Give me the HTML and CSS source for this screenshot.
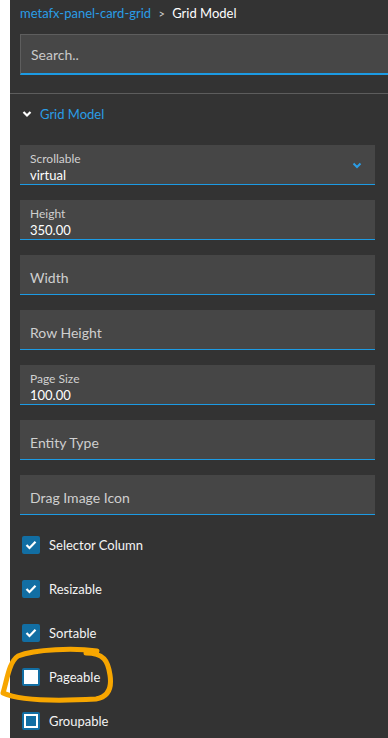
FILE: index.html
```html
<!DOCTYPE html>
<html lang="en">
<head>
  <meta charset="UTF-8">
  <meta name="viewport" content="width=device-width, initial-scale=1.0">
  <title>Grid Model</title>
  <link rel="stylesheet" href="styles.css">
</head>
<body>

<div class="panel">
  <!-- Breadcrumb -->
  <div class="crumbs">
    <a href="#" class="crumb-link">metafx-panel-card-grid</a>
    <span class="crumb-sep">&gt;</span>
    <span class="crumb-current">Grid Model</span>
  </div>

  <!-- Search -->
  <div class="search">
    <span class="placeholder">Search..</span>
  </div>

  <div class="divider"></div>

  <!-- Section -->
  <div class="section-head">
    <svg class="chev" width="10" height="8" viewBox="0 0 10 8">
      <path d="M1.5 2 L5 5.5 L8.5 2" fill="none" stroke="#ffffff" stroke-width="2.2"/>
    </svg>
    <span>Grid Model</span>
  </div>

  <div class="fields">
    <div class="field filled">
      <div class="field-text">
        <span class="label">Scrollable</span>
        <span class="value">virtual</span>
      </div>
      <svg class="select-chev" width="10" height="7" viewBox="0 0 10 7">
        <path d="M1.5 1.5 L5 5 L8.5 1.5" fill="none" stroke="#2a9de6" stroke-width="2"/>
      </svg>
    </div>
    <div class="field filled">
      <div class="field-text">
        <span class="label">Height</span>
        <span class="value">350.00</span>
      </div>
    </div>
    <div class="field">
      <span class="placeholder">Width</span>
    </div>
    <div class="field">
      <span class="placeholder">Row Height</span>
    </div>
    <div class="field filled">
      <div class="field-text">
        <span class="label">Page Size</span>
        <span class="value">100.00</span>
      </div>
    </div>
    <div class="field">
      <span class="placeholder">Entity Type</span>
    </div>
    <div class="field">
      <span class="placeholder">Drag Image Icon</span>
    </div>
  </div>

  <!-- Checkboxes -->
  <div class="checks">
    <label class="check-row">
      <span class="box checked">
        <svg width="12" height="10" viewBox="0 0 12 10"><path d="M1.5 5 L4.5 8 L10.5 1.8" fill="none" stroke="#fff" stroke-width="2.2"/></svg>
      </span>
      Selector Column
    </label>
    <label class="check-row">
      <span class="box checked">
        <svg width="12" height="10" viewBox="0 0 12 10"><path d="M1.5 5 L4.5 8 L10.5 1.8" fill="none" stroke="#fff" stroke-width="2.2"/></svg>
      </span>
      Resizable
    </label>
    <label class="check-row">
      <span class="box checked">
        <svg width="12" height="10" viewBox="0 0 12 10"><path d="M1.5 5 L4.5 8 L10.5 1.8" fill="none" stroke="#fff" stroke-width="2.2"/></svg>
      </span>
      Sortable
    </label>
    <label class="check-row">
      <span class="box empty"></span>
      Pageable
    </label>
    <label class="check-row">
      <span class="box focus"><span class="dot"></span></span>
      Groupable
    </label>
  </div>
</div>

<!-- Hand-drawn highlight -->
<svg class="scribble" width="120" height="70" viewBox="0 640 120 70">
  <path d="M97 651 C 75 648, 35 649, 18 656 C 9 662, 7 680, 3 693 C 20 701, 60 701, 96 699 C 108 697, 112 688, 110 675 C 108 661, 104 653, 86 653"
        fill="none" stroke="#f7a600" stroke-width="5" stroke-linecap="round" stroke-linejoin="round"/>
</svg>

</body>
</html>
```

FILE: styles.css
```css
html, body {
  margin: 0;
  padding: 0;
  height: 100%;
  background: #ffffff;
}

body {
  font-family: 'Lato', 'Liberation Sans', sans-serif;
  overflow: hidden;
}

.panel {
  margin-left: 10px;
  min-height: 100vh;
  background: #333333;
  padding-left: 10px;
  box-sizing: border-box;
}

/* Breadcrumb */
.crumbs {
  height: 26px;
  line-height: 26px;
  font-size: 13px;
  margin-bottom: 8px;
}

.crumb-link {
  color: #2a9de6;
  text-decoration: none;
}

.crumb-sep {
  color: #cfcfcf;
  font-size: 11px;
  margin: 0 4px;
}

.crumb-current {
  color: #ffffff;
}

/* Search box */
.search {
  height: 38px;
  background: #474747;
  border-top: 1px solid #5e5e5e;
  border-left: 1px solid #5e5e5e;
  border-bottom: 2px solid #1c9be4;
  display: flex;
  align-items: center;
  padding-left: 10px;
}

.search .placeholder {
  color: #c9c9c9;
  font-size: 14px;
}

.divider {
  height: 1px;
  background: #5d5d5d;
  margin: 18px 0 0 -10px;
}

/* Section header */
.section-head {
  height: 40px;
  display: flex;
  align-items: center;
  gap: 8px;
  padding-left: 2px;
  color: #2a9de6;
  font-size: 13px;
}

/* Fields */
.fields {
  display: flex;
  flex-direction: column;
  gap: 15px;
  margin-top: 11px;
  margin-right: 13px;
}

.field {
  height: 39px;
  background: #464646;
  border-bottom: 1px solid #1c9be4;
  display: flex;
  align-items: center;
  justify-content: space-between;
  padding: 0 10px;
}

.field-text {
  display: flex;
  flex-direction: column;
  line-height: 16px;
  margin-top: 4px;
}

.field .label {
  color: #d0d0d0;
  font-size: 12px;
}

.field .value {
  color: #ffffff;
  font-size: 13px;
}

.field .placeholder {
  color: #cfcfcf;
  font-size: 14px;
  padding-top: 6px;
}

.select-chev {
  margin-right: 3px;
  margin-top: 2px;
}

/* Checkboxes */
.checks {
  display: flex;
  flex-direction: column;
  margin-top: 8px;
}

.check-row {
  height: 44px;
  display: flex;
  align-items: center;
  gap: 9px;
  padding-left: 2px;
  color: #f4f4f4;
  font-size: 13px;
}

.box {
  width: 18px;
  height: 18px;
  border-radius: 2px;
  box-sizing: border-box;
  display: flex;
  align-items: center;
  justify-content: center;
}

.box.checked {
  background: #126ea3;
}

.box.empty {
  background: #ffffff;
  border: 2px solid #126ea3;
}

.box.focus {
  background: #ffffff;
  border: 2px solid #126ea3;
}

.box.focus .dot {
  width: 10px;
  height: 10px;
  background: #126ea3;
}

/* Annotation overlay */
.scribble {
  position: absolute;
  left: 0;
  top: 640px;
}
```
